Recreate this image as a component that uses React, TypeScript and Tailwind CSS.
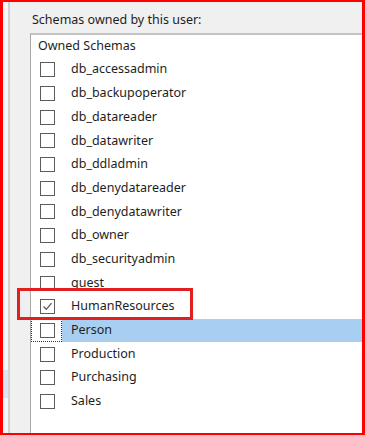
const FONT = '"Noto Sans", "Open Sans", sans-serif'

const schemas = [
  'db_accessadmin',
  'db_backupoperator',
  'db_datareader',
  'db_datawriter',
  'db_ddladmin',
  'db_denydatareader',
  'db_denydatawriter',
  'db_owner',
  'db_securityadmin',
  'guest',
  'HumanResources',
  'Person',
  'Production',
  'Purchasing',
  'Sales',
]

function CheckBox({ checked }: { checked?: boolean }) {
  return (
    <div className="w-[15px] h-[15px] border-[1.5px] border-[#5c5c5c] bg-white flex items-center justify-center shrink-0">
      {checked && (
        <svg width="11" height="11" viewBox="0 0 11 11">
          <path d="M1.5 5.5 L4.3 8.3 L9.5 2.2" fill="none" stroke="#5a5a5a" strokeWidth="1.3" />
        </svg>
      )}
    </div>
  )
}

export default function App() {
  return (
    <div
      className="relative w-[365px] h-[435px] overflow-hidden border-l-[3px] border-r-[3px] border-t-2 border-b-2 border-[#ff0000] bg-[#f0f0f0] flex"
      style={{ fontFamily: FONT }}
    >
      {/* left sliver of the neighbouring pane */}
      <div className="w-[5px] shrink-0 bg-[#f7f7f7] flex flex-col">
        <div className="h-[368px]" />
        <div className="h-[28px] bg-[#dbe6f2]" />
      </div>
      <div className="w-[2px] shrink-0 bg-[#d2d2d2]" />

      <div className="flex-1 flex flex-col min-w-0">
        <p className="pl-[22px] pt-[10px] h-[31px] text-[12.5px] leading-[16px] text-[#1e1e1e] whitespace-nowrap">
          Schemas owned by this user:
        </p>

        {/* listbox */}
        <div className="ml-[20px] flex-1 bg-white border-l border-t-2 border-l-[#a9a9a9] border-t-[#c4c4c4] w-[400px]">
          <div className="h-[23px] pl-[7px] flex items-center text-[12.5px] text-[#1e1e1e]">Owned Schemas</div>
          {schemas.map((s) => {
            const selected = s === 'Person'
            return (
              <div key={s} className="h-[23.7px] flex items-stretch text-[12.5px] text-[#1e1e1e] whitespace-nowrap">
                <div
                  className={
                    'w-[31px] shrink-0 flex items-center ' +
                    (selected ? 'border border-dotted border-[#333] pl-[8px]' : 'pl-[9px]')
                  }
                >
                  <CheckBox checked={s === 'HumanResources'} />
                </div>
                <div className={'flex-1 flex items-center pl-[9px] ' + (selected ? 'bg-[#a8cff1]' : '')}>{s}</div>
              </div>
            )
          })}
        </div>
      </div>

      {/* annotation box */}
      <div className="absolute left-[14px] top-[286px] w-[176px] h-[32px] border-[3.5px] border-[#e21f1f]" />
    </div>
  )
}
